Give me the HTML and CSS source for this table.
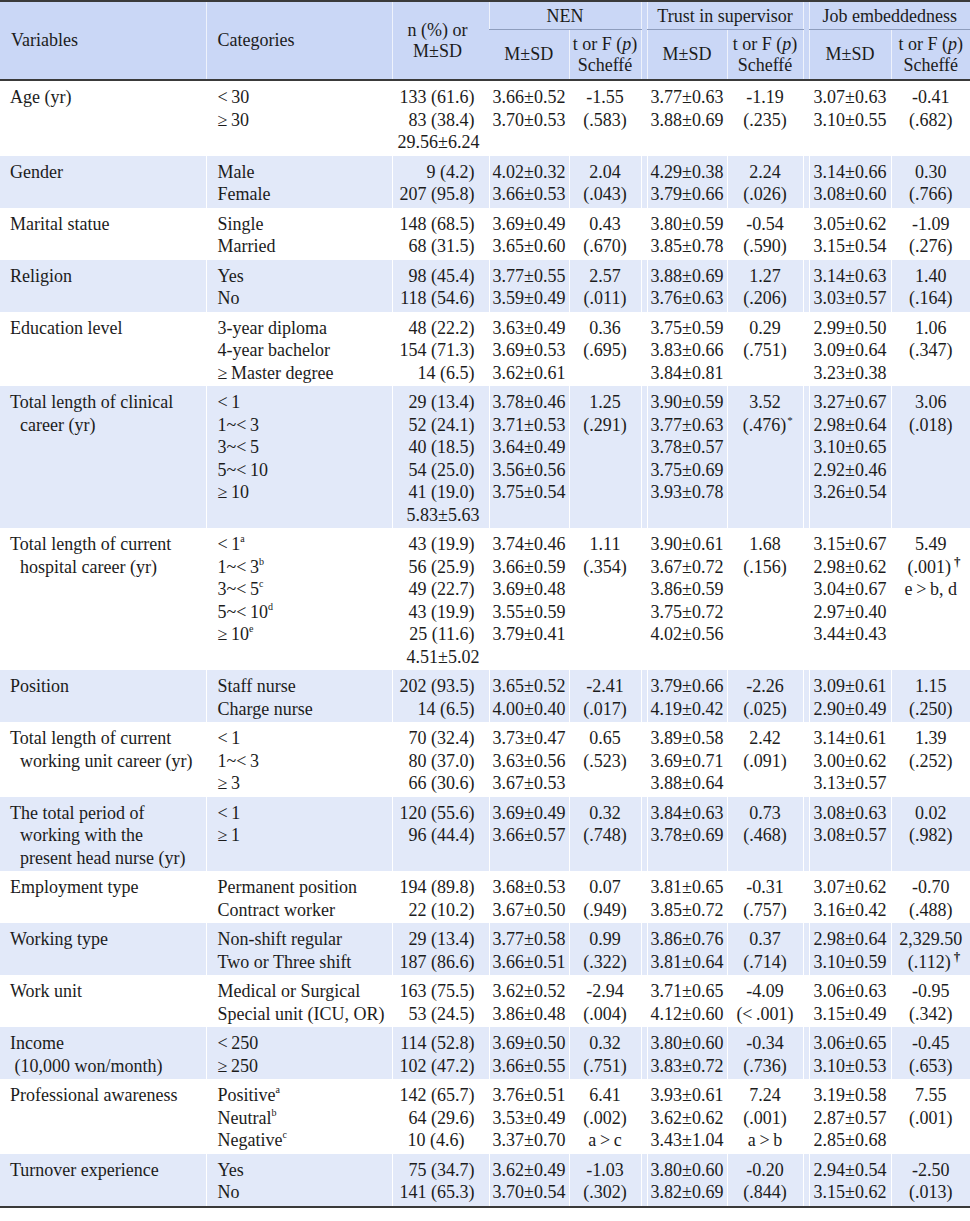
FILE: index.html
```html
<!DOCTYPE html>
<html>
<head>
<meta charset="utf-8">
<link rel="stylesheet" href="styles.css">
</head>
<body>
<table class="t">
<colgroup>
<col class="c-var"><col class="c-cat"><col class="c-n">
<col class="c-m1"><col class="c-t1"><col class="c-sp">
<col class="c-m2"><col class="c-t2"><col class="c-sp">
<col class="c-m3"><col class="c-t3">
</colgroup>
<thead>
<tr class="h1">
<th rowspan="2" class="hl">Variables</th>
<th rowspan="2" class="hl hc">Categories</th>
<th rowspan="2" class="hn">n (%) or<br>M±SD</th>
<th colspan="2" class="grp">NEN</th>
<th rowspan="2" class="sp"></th>
<th colspan="2" class="grp">Trust in supervisor</th>
<th rowspan="2" class="sp"></th>
<th colspan="2" class="grp">Job embeddedness</th>
</tr>
<tr class="h2">
<th>M±SD</th><th>t or F (<i>p</i>)<br>Scheffé</th>
<th>M±SD</th><th>t or F (<i>p</i>)<br>Scheffé</th>
<th>M±SD</th><th>t or F (<i>p</i>)<br>Scheffé</th>
</tr>
</thead>
<tbody>
<tr>
<td class="var">Age (yr)</td>
<td class="cat">&lt;&thinsp;30<br>≥&thinsp;30</td>
<td class="n">133 (61.6)<br>83 (38.4)<br><span class="mean">29.56±6.24</span></td>
<td class="m">3.66±0.52<br>3.70±0.53</td><td class="tv">-1.55<br>(.583)</td><td class="sp"></td>
<td class="m">3.77±0.63<br>3.88±0.69</td><td class="tv">-1.19<br>(.235)</td><td class="sp"></td>
<td class="m">3.07±0.63<br>3.10±0.55</td><td class="tv">-0.41<br>(.682)</td>
</tr>
<tr class="alt">
<td class="var">Gender</td>
<td class="cat">Male<br>Female</td>
<td class="n">9 (4.2)<br>207 (95.8)</td>
<td class="m">4.02±0.32<br>3.66±0.53</td><td class="tv">2.04<br>(.043)</td><td class="sp"></td>
<td class="m">4.29±0.38<br>3.79±0.66</td><td class="tv">2.24<br>(.026)</td><td class="sp"></td>
<td class="m">3.14±0.66<br>3.08±0.60</td><td class="tv">0.30<br>(.766)</td>
</tr>
<tr>
<td class="var">Marital statue</td>
<td class="cat">Single<br>Married</td>
<td class="n">148 (68.5)<br>68 (31.5)</td>
<td class="m">3.69±0.49<br>3.65±0.60</td><td class="tv">0.43<br>(.670)</td><td class="sp"></td>
<td class="m">3.80±0.59<br>3.85±0.78</td><td class="tv">-0.54<br>(.590)</td><td class="sp"></td>
<td class="m">3.05±0.62<br>3.15±0.54</td><td class="tv">-1.09<br>(.276)</td>
</tr>
<tr class="alt">
<td class="var">Religion</td>
<td class="cat">Yes<br>No</td>
<td class="n">98 (45.4)<br>118 (54.6)</td>
<td class="m">3.77±0.55<br>3.59±0.49</td><td class="tv">2.57<br>(.011)</td><td class="sp"></td>
<td class="m">3.88±0.69<br>3.76±0.63</td><td class="tv">1.27<br>(.206)</td><td class="sp"></td>
<td class="m">3.14±0.63<br>3.03±0.57</td><td class="tv">1.40<br>(.164)</td>
</tr>
<tr>
<td class="var">Education level</td>
<td class="cat">3-year diploma<br>4-year bachelor<br>≥&thinsp;Master degree</td>
<td class="n">48 (22.2)<br>154 (71.3)<br>14 (6.5)</td>
<td class="m">3.63±0.49<br>3.69±0.53<br>3.62±0.61</td><td class="tv">0.36<br>(.695)</td><td class="sp"></td>
<td class="m">3.75±0.59<br>3.83±0.66<br>3.84±0.81</td><td class="tv">0.29<br>(.751)</td><td class="sp"></td>
<td class="m">2.99±0.50<br>3.09±0.64<br>3.23±0.38</td><td class="tv">1.06<br>(.347)</td>
</tr>
<tr class="alt">
<td class="var">Total length of clinical<br>career (yr)</td>
<td class="cat">&lt;&thinsp;1<br>1~&lt;&thinsp;3<br>3~&lt;&thinsp;5<br>5~&lt;&thinsp;10<br>≥&thinsp;10</td>
<td class="n">29 (13.4)<br>52 (24.1)<br>40 (18.5)<br>54 (25.0)<br>41 (19.0)<br><span class="mean">5.83±5.63</span></td>
<td class="m">3.78±0.46<br>3.71±0.53<br>3.64±0.49<br>3.56±0.56<br>3.75±0.54</td><td class="tv">1.25<br>(.291)</td><td class="sp"></td>
<td class="m">3.90±0.59<br>3.77±0.63<br>3.78±0.57<br>3.75±0.69<br>3.93±0.78</td><td class="tv">3.52<br>(.476)<span class="mk">*</span></td><td class="sp"></td>
<td class="m">3.27±0.67<br>2.98±0.64<br>3.10±0.65<br>2.92±0.46<br>3.26±0.54</td><td class="tv">3.06<br>(.018)</td>
</tr>
<tr>
<td class="var">Total length of current<br>hospital career (yr)</td>
<td class="cat">&lt;&thinsp;1<sup>a</sup><br>1~&lt;&thinsp;3<sup>b</sup><br>3~&lt;&thinsp;5<sup>c</sup><br>5~&lt;&thinsp;10<sup>d</sup><br>≥&thinsp;10<sup>e</sup></td>
<td class="n">43 (19.9)<br>56 (25.9)<br>49 (22.7)<br>43 (19.9)<br>25 (11.6)<br><span class="mean">4.51±5.02</span></td>
<td class="m">3.74±0.46<br>3.66±0.59<br>3.69±0.48<br>3.55±0.59<br>3.79±0.41</td><td class="tv">1.11<br>(.354)</td><td class="sp"></td>
<td class="m">3.90±0.61<br>3.67±0.72<br>3.86±0.59<br>3.75±0.72<br>4.02±0.56</td><td class="tv">1.68<br>(.156)</td><td class="sp"></td>
<td class="m">3.15±0.67<br>2.98±0.62<br>3.04±0.67<br>2.97±0.40<br>3.44±0.43</td><td class="tv">5.49<br>(.001)<span class="mk dag">†</span><br>e&thinsp;&gt;&thinsp;b, d</td>
</tr>
<tr class="alt">
<td class="var">Position</td>
<td class="cat">Staff nurse<br>Charge nurse</td>
<td class="n">202 (93.5)<br>14 (6.5)</td>
<td class="m">3.65±0.52<br>4.00±0.40</td><td class="tv">-2.41<br>(.017)</td><td class="sp"></td>
<td class="m">3.79±0.66<br>4.19±0.42</td><td class="tv">-2.26<br>(.025)</td><td class="sp"></td>
<td class="m">3.09±0.61<br>2.90±0.49</td><td class="tv">1.15<br>(.250)</td>
</tr>
<tr>
<td class="var">Total length of current<br>working unit career (yr)</td>
<td class="cat">&lt;&thinsp;1<br>1~&lt;&thinsp;3<br>≥&thinsp;3</td>
<td class="n">70 (32.4)<br>80 (37.0)<br>66 (30.6)</td>
<td class="m">3.73±0.47<br>3.63±0.56<br>3.67±0.53</td><td class="tv">0.65<br>(.523)</td><td class="sp"></td>
<td class="m">3.89±0.58<br>3.69±0.71<br>3.88±0.64</td><td class="tv">2.42<br>(.091)</td><td class="sp"></td>
<td class="m">3.14±0.61<br>3.00±0.62<br>3.13±0.57</td><td class="tv">1.39<br>(.252)</td>
</tr>
<tr class="alt">
<td class="var">The total period of<br>working with the<br>present head nurse (yr)</td>
<td class="cat">&lt;&thinsp;1<br>≥&thinsp;1</td>
<td class="n">120 (55.6)<br>96 (44.4)</td>
<td class="m">3.69±0.49<br>3.66±0.57</td><td class="tv">0.32<br>(.748)</td><td class="sp"></td>
<td class="m">3.84±0.63<br>3.78±0.69</td><td class="tv">0.73<br>(.468)</td><td class="sp"></td>
<td class="m">3.08±0.63<br>3.08±0.57</td><td class="tv">0.02<br>(.982)</td>
</tr>
<tr>
<td class="var">Employment type</td>
<td class="cat">Permanent position<br>Contract worker</td>
<td class="n">194 (89.8)<br>22 (10.2)</td>
<td class="m">3.68±0.53<br>3.67±0.50</td><td class="tv">0.07<br>(.949)</td><td class="sp"></td>
<td class="m">3.81±0.65<br>3.85±0.72</td><td class="tv">-0.31<br>(.757)</td><td class="sp"></td>
<td class="m">3.07±0.62<br>3.16±0.42</td><td class="tv">-0.70<br>(.488)</td>
</tr>
<tr class="alt">
<td class="var">Working type</td>
<td class="cat">Non-shift regular<br>Two or Three shift</td>
<td class="n">29 (13.4)<br>187 (86.6)</td>
<td class="m">3.77±0.58<br>3.66±0.51</td><td class="tv">0.99<br>(.322)</td><td class="sp"></td>
<td class="m">3.86±0.76<br>3.81±0.64</td><td class="tv">0.37<br>(.714)</td><td class="sp"></td>
<td class="m">2.98±0.64<br>3.10±0.59</td><td class="tv">2,329.50<br>(.112)<span class="mk dag">†</span></td>
</tr>
<tr>
<td class="var">Work unit</td>
<td class="cat">Medical or Surgical<br>Special unit (ICU, OR)</td>
<td class="n">163 (75.5)<br>53 (24.5)</td>
<td class="m">3.62±0.52<br>3.86±0.48</td><td class="tv">-2.94<br>(.004)</td><td class="sp"></td>
<td class="m">3.71±0.65<br>4.12±0.60</td><td class="tv">-4.09<br>(&lt;&thinsp;.001)</td><td class="sp"></td>
<td class="m">3.06±0.63<br>3.15±0.49</td><td class="tv">-0.95<br>(.342)</td>
</tr>
<tr class="alt">
<td class="var flat">Income<br>&nbsp;(10,000 won/month)</td>
<td class="cat">&lt;&thinsp;250<br>≥&thinsp;250</td>
<td class="n">114 (52.8)<br>102 (47.2)</td>
<td class="m">3.69±0.50<br>3.66±0.55</td><td class="tv">0.32<br>(.751)</td><td class="sp"></td>
<td class="m">3.80±0.60<br>3.83±0.72</td><td class="tv">-0.34<br>(.736)</td><td class="sp"></td>
<td class="m">3.06±0.65<br>3.10±0.53</td><td class="tv">-0.45<br>(.653)</td>
</tr>
<tr>
<td class="var">Professional awareness</td>
<td class="cat">Positive<sup>a</sup><br>Neutral<sup>b</sup><br>Negative<sup>c</sup></td>
<td class="n">142 (65.7)<br>64 (29.6)<br><span class="short">10 (4.6)</span></td>
<td class="m">3.76±0.51<br>3.53±0.49<br>3.37±0.70</td><td class="tv">6.41<br>(.002)<br>a&thinsp;&gt;&thinsp;c</td><td class="sp"></td>
<td class="m">3.93±0.61<br>3.62±0.62<br>3.43±1.04</td><td class="tv">7.24<br>(.001)<br>a&thinsp;&gt;&thinsp;b</td><td class="sp"></td>
<td class="m">3.19±0.58<br>2.87±0.57<br>2.85±0.68</td><td class="tv">7.55<br>(.001)</td>
</tr>
<tr class="alt">
<td class="var">Turnover experience</td>
<td class="cat">Yes<br>No</td>
<td class="n">75 (34.7)<br>141 (65.3)</td>
<td class="m">3.62±0.49<br>3.70±0.54</td><td class="tv">-1.03<br>(.302)</td><td class="sp"></td>
<td class="m">3.80±0.60<br>3.82±0.69</td><td class="tv">-0.20<br>(.844)</td><td class="sp"></td>
<td class="m">2.94±0.54<br>3.15±0.62</td><td class="tv">-2.50<br>(.013)</td>
</tr>
</tbody>
</table>
</body>
</html>
```
FILE: styles.css
```css
html, body {
  margin: 0;
  padding: 0;
  background: #ffffff;
}
body {
  font-family: "Liberation Serif", "Times New Roman", serif;
  font-size: 18px;
  color: #1c1c1c;
}
.t {
  width: 970px;
  table-layout: fixed;
  border-collapse: collapse;
  border-top: 2px solid #3a3a3a;
  border-bottom: 2px solid #3a3a3a;
}
.c-var { width: 206px; }
.c-cat { width: 186px; }
.c-n { width: 97px; }
.c-m1 { width: 80px; }
.c-t1 { width: 72px; }
.c-sp { width: 6px; }
.c-m2 { width: 80px; }
.c-t2 { width: 76px; }
.c-m3 { width: 82px; }
.c-t3 { width: 79px; }

thead {
  border-bottom: 2px solid #3a3a3a;
}
th {
  background: #cad7f6;
  font-weight: normal;
  line-height: 21px;
  padding: 0;
  text-align: center;
  vertical-align: middle;
  border-left: 1px solid #eef2fc;
}
th:first-child { border-left: none; }
th.hl {
  text-align: left;
  padding-left: 11px;
}
th.hn {
  padding-right: 6px;
}
.h1 th.grp {
  height: 27px;
  line-height: 22px;
  border-bottom: 1px solid #8e9dbd;
}
.h2 th {
  height: 49px;
}
td {
  padding: 5px 0 2px;
  line-height: 22.5px;
  vertical-align: top;
  white-space: nowrap;
  border-left: 1px solid #ffffff;
}
td:first-child { border-left: none; }
tr.alt td {
  background: #e2e9f9;
}
td.var {
  padding-left: 20px;
  text-indent: -10px;
}
td.var.flat {
  padding-left: 10px;
  text-indent: 0;
}
td.cat {
  padding-left: 11px;
}
td.n {
  text-align: right;
  padding-right: 14px;
}
.mean {
  margin-right: -5px;
}
.short {
  padding-right: 10px;
}
td.m, td.tv {
  text-align: center;
}
sup {
  font-size: 10px;
  line-height: 0;
  vertical-align: 8px;
}
.mk {
  display: inline-block;
  width: 0;
  font-size: 11px;
  line-height: 0;
  vertical-align: 7px;
  padding-left: 1px;
}
.mk.dag {
  font-size: 13px;
  font-weight: bold;
  padding-left: 3px;
}
```
